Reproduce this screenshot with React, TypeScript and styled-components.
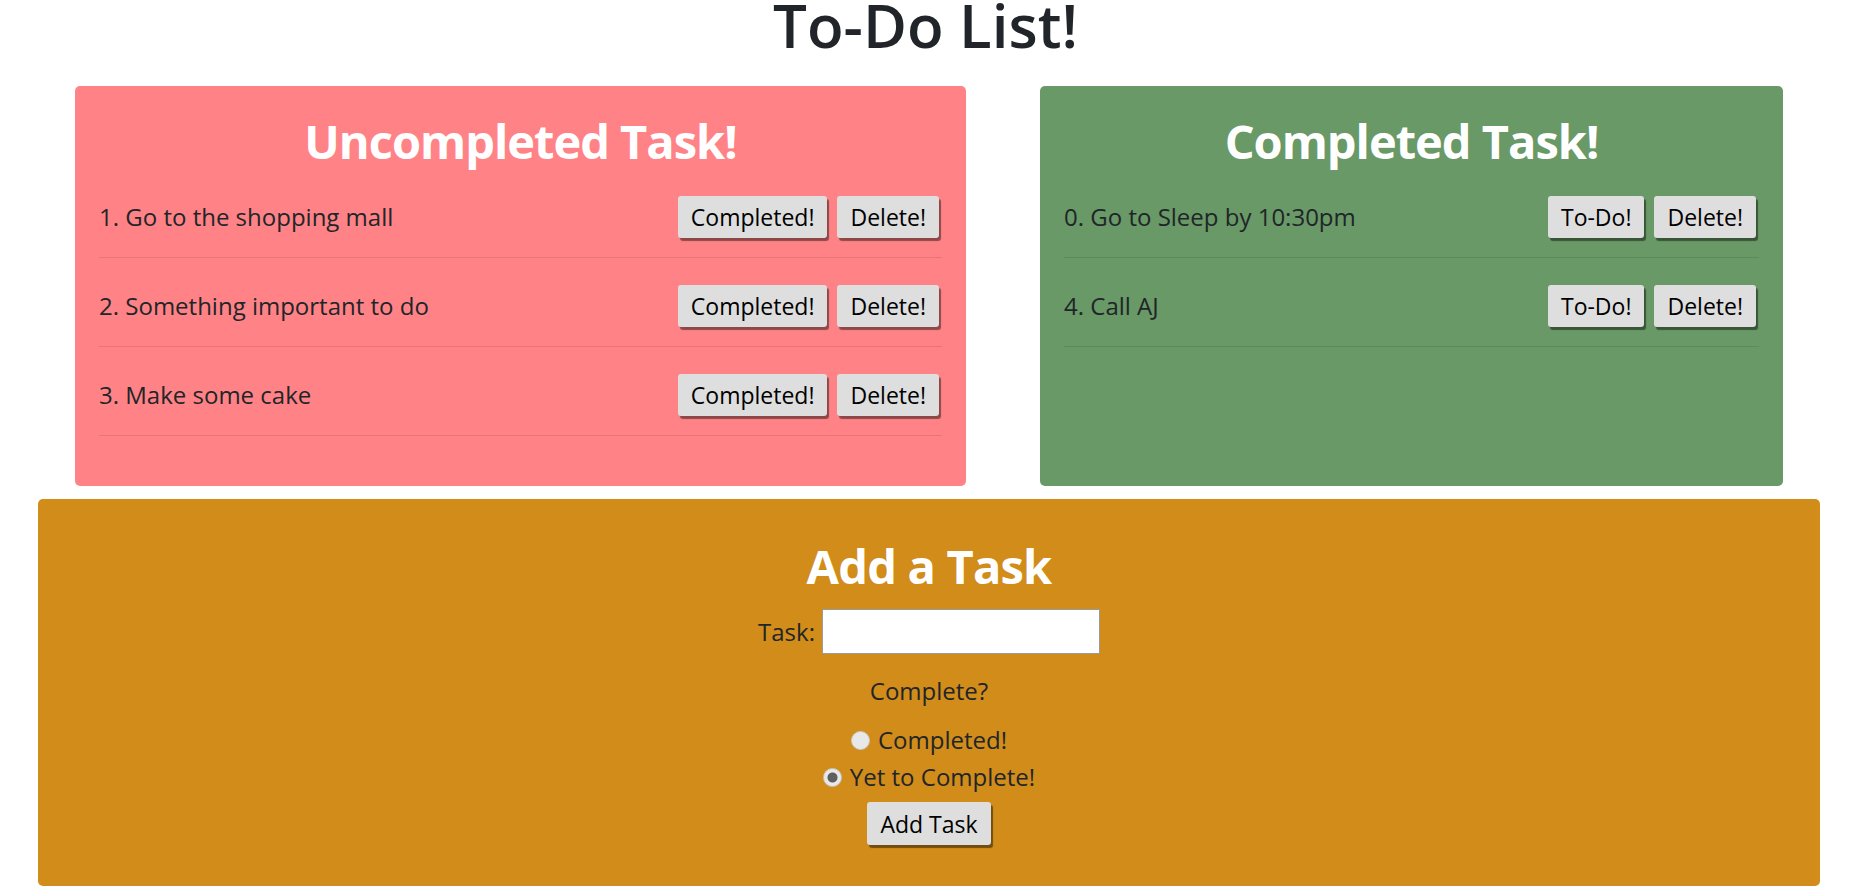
import React from "react";
import styled, { createGlobalStyle } from "styled-components";

const GlobalStyle = createGlobalStyle`
  html, body {
    margin: 0;
    padding: 0;
    background: #ffffff;
  }
  body {
    font-family: "Open Sans", "Noto Sans", sans-serif;
    color: #212529;
  }
  * { box-sizing: border-box; }
`;

const Page = styled.div`
  width: 1851px;
  height: 890px;
  overflow: hidden;
`;

const Title = styled.h1`
  margin: 0;
  text-align: center;
  font-size: 60px;
  font-weight: 600;
  line-height: 51px;
  color: #212529;
`;

const Columns = styled.div`
  display: grid;
  grid-template-columns: 891px 743px;
  column-gap: 74px;
  padding-left: 75px;
  margin-top: 35px;
`;

const Panel = styled.section<{ $bg: string }>`
  background: ${(p) => p.$bg};
  border-radius: 5px;
  height: 400px;
  padding: 28px 24px 0 24px;
`;

const PanelTitle = styled.h2`
  margin: 0;
  text-align: center;
  color: #ffffff;
  font-size: 47px;
  font-weight: 700;
  letter-spacing: -1px;
  line-height: 55px;
`;

const TaskList = styled.ul`
  list-style: none;
  margin: 0;
  padding: 0;
`;

const TaskRow = styled.li`
  display: flex;
  align-items: center;
  justify-content: space-between;
  height: 89px;
  padding-top: 8px;
  border-bottom: 1px solid rgba(0, 0, 0, 0.1);
`;

const TaskText = styled.span`
  font-size: 24px;
  line-height: 36px;
  color: #212529;
`;

const Actions = styled.div`
  display: flex;
  gap: 10px;
  margin-right: 3px;
`;

const ActionButton = styled.button`
  height: 42px;
  padding: 0 13px;
  font-family: "Open Sans", "Noto Sans", sans-serif;
  font-size: 23px;
  color: #000000;
  background: #dedede;
  border: none;
  border-radius: 3px;
  box-shadow: 2px 3px 1px rgba(0, 0, 0, 0.45);
  cursor: pointer;
`;

const AddPanel = styled.form`
  background: #d18c1a;
  border-radius: 5px;
  margin: 13px 0 0 38px;
  width: 1782px;
  height: 387px;
  padding-top: 39px;
  display: flex;
  flex-direction: column;
  align-items: center;
`;

const AddTitle = styled.h2`
  margin: 0;
  color: #ffffff;
  font-size: 47px;
  font-weight: 700;
  letter-spacing: -0.8px;
  line-height: 56px;
`;

const FieldRow = styled.label`
  display: flex;
  align-items: center;
  gap: 7px;
  margin-top: 15px;
  font-size: 24px;
  line-height: 36px;
`;

const TextInput = styled.input`
  width: 278px;
  height: 45px;
  border: 1px solid #9a9a9a;
  background: #ffffff;
  font-size: 22px;
  padding: 0 6px;
`;

const Question = styled.p`
  margin: 19px 0 0;
  font-size: 24px;
  line-height: 36px;
`;

const RadioGroup = styled.div`
  display: flex;
  flex-direction: column;
  align-items: center;
  gap: 1px;
  margin-top: 13px;
`;

const RadioLabel = styled.label`
  display: flex;
  align-items: center;
  gap: 8px;
  font-size: 24px;
  line-height: 36px;
`;

const Radio = styled.input`
  appearance: none;
  width: 19px;
  height: 19px;
  margin: 0;
  border-radius: 50%;
  border: 1px solid #c9c9c9;
  background: #e8e8e8;
  &:checked {
    background: radial-gradient(circle, #5f5f5f 0 4.5px, #e8e8e8 5.5px);
  }
`;

const SubmitButton = styled(ActionButton)`
  margin-top: 7px;
  height: 43px;
`;

type Task = { id: number; text: string };

const uncompleted: Task[] = [
  { id: 1, text: "Go to the shopping mall" },
  { id: 2, text: "Something important to do" },
  { id: 3, text: "Make some cake" },
];

const completed: Task[] = [
  { id: 0, text: "Go to Sleep by 10:30pm" },
  { id: 4, text: "Call AJ" },
];

export default function App() {
  return (
    <Page>
      <GlobalStyle />
      <Title>To-Do List!</Title>
      <Columns>
        <Panel $bg="#ff8386">
          <PanelTitle>Uncompleted Task!</PanelTitle>
          <TaskList>
            {uncompleted.map((t) => (
              <TaskRow key={t.id}>
                <TaskText>
                  {t.id}. {t.text}
                </TaskText>
                <Actions>
                  <ActionButton type="button">Completed!</ActionButton>
                  <ActionButton type="button">Delete!</ActionButton>
                </Actions>
              </TaskRow>
            ))}
          </TaskList>
        </Panel>
        <Panel $bg="#689966">
          <PanelTitle>Completed Task!</PanelTitle>
          <TaskList>
            {completed.map((t) => (
              <TaskRow key={t.id}>
                <TaskText>
                  {t.id}. {t.text}
                </TaskText>
                <Actions>
                  <ActionButton type="button">To-Do!</ActionButton>
                  <ActionButton type="button">Delete!</ActionButton>
                </Actions>
              </TaskRow>
            ))}
          </TaskList>
        </Panel>
      </Columns>
      <AddPanel onSubmit={(e) => e.preventDefault()}>
        <AddTitle>Add a Task</AddTitle>
        <FieldRow>
          Task:
          <TextInput type="text" />
        </FieldRow>
        <Question>Complete?</Question>
        <RadioGroup>
          <RadioLabel>
            <Radio type="radio" name="complete" />
            Completed!
          </RadioLabel>
          <RadioLabel>
            <Radio type="radio" name="complete" defaultChecked />
            Yet to Complete!
          </RadioLabel>
        </RadioGroup>
        <SubmitButton type="submit">Add Task</SubmitButton>
      </AddPanel>
    </Page>
  );
}
